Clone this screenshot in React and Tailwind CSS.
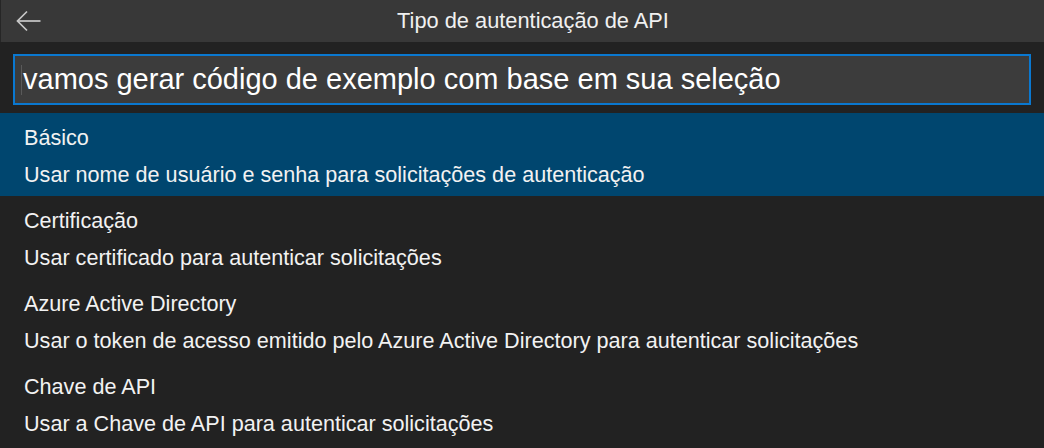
import React from 'react';

const items = [
    { title: 'Básico', desc: 'Usar nome de usuário e senha para solicitações de autenticação' },
    { title: 'Certificação', desc: 'Usar certificado para autenticar solicitações' },
    { title: 'Azure Active Directory', desc: 'Usar o token de acesso emitido pelo Azure Active Directory para autenticar solicitações' },
    { title: 'Chave de API', desc: 'Usar a Chave de API para autenticar solicitações' },
];

function BackArrow() {
    return (
        <svg width="26" height="22" viewBox="0 0 26 22" fill="none" stroke="#c8c8c8" strokeWidth="1.7">
            <path d="M24.5 11H2" />
            <path d="M11 1.5L1.5 11l9.5 9.5" />
        </svg>
    );
}

export default function App() {
    const selected = 0;

    return (
        <div className="w-[1044px] h-[448px] bg-[#222222] overflow-hidden text-white" style={{ fontFamily: '"Liberation Sans", Arial, sans-serif' }}>
            <div className="h-[42px] bg-[#383838] border-l border-[#262626] flex items-center relative">
                <div className="pl-[15px] flex items-center">
                    <BackArrow />
                </div>
                <div className="absolute top-0 bottom-0 left-[21px] right-0 flex items-center justify-center text-[21.8px] text-[#f0f0f0]">
                    Tipo de autenticação de API
                </div>
            </div>

            <div className="pt-[12px] px-[13px]">
                <div className="h-[51px] border-2 border-[#0a78d0] bg-[#3c3c3c] flex items-center pl-[6px]">
                    <div className="w-px h-[30px] bg-[#5a5a5a] mr-px" />
                    <span className="text-[29px] text-white">vamos gerar código de exemplo com base em sua seleção</span>
                </div>
            </div>

            <div className="mt-[8px]">
                {items.map((item, i) => (
                    <div
                        key={item.title}
                        className={`h-[83px] flex flex-col pl-[24px] pt-[12px] ${i === selected ? 'bg-[#00466f]' : ''}`}>
                        <div className="text-[21.6px] leading-[26px] text-[#f2f2f2]">{item.title}</div>
                        <div className="text-[21.6px] leading-[26px] mt-[11px] text-[#f2f2f2]">{item.desc}</div>
                    </div>
                ))}
            </div>
        </div>
    );
}
